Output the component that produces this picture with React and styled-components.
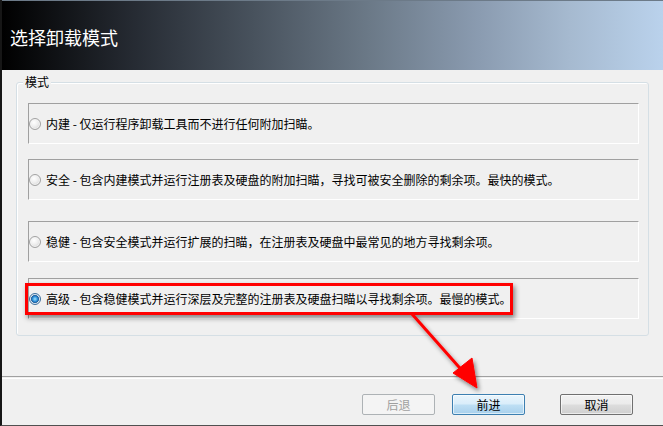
import React from 'react';
import styled, { createGlobalStyle } from 'styled-components';

const GlobalStyle = createGlobalStyle`
  html, body {
    margin: 0;
    padding: 0;
    background: #f0f0f0;
  }
  body {
    font-family: "Noto Sans CJK SC", "Liberation Sans", sans-serif;
    font-size: 12px;
    color: #000;
  }
`;

const Window = styled.div`
  position: relative;
  width: 663px;
  height: 426px;
  box-sizing: border-box;
  border-left: 2px solid #161616;
  border-bottom: 1px solid #505050;
  background: #f0f0f0;
  display: flex;
  flex-direction: column;
  overflow: hidden;
`;

const Header = styled.div`
  height: 70px;
  flex: none;
  display: flex;
  align-items: center;
  padding-left: 8px;
  border-top: 1px solid #6c7a88;
  box-sizing: border-box;
  background: linear-gradient(
    to right,
    #000000 0%,
    #262b33 20%,
    #48525d 38%,
    #6a7886 55%,
    #8a9bb0 72%,
    #a6bad0 86%,
    #bad2ec 100%
  );
`;

const Title = styled.h1`
  margin: 0;
  font-size: 18px;
  font-weight: 400;
  color: #fff;
  letter-spacing: 0;
  line-height: 20px;
  padding-top: 2px;
`;

const Group = styled.div`
  position: relative;
  margin: 12px 0 0 14px;
  width: 633px;
  height: 254px;
  box-sizing: border-box;
  border: 1px solid #d5dfe5;
  border-radius: 3px;
  box-shadow: inset 1px 1px 0 #ffffff;
  padding: 20px 0 0 11px;
`;

const Legend = styled.span`
  position: absolute;
  top: -8px;
  left: 6px;
  padding: 0 2px;
  background: #f0f0f0;
  line-height: 14px;
`;

const OptionList = styled.div`
  display: flex;
  flex-direction: column;
`;

const Option = styled.div`
  position: relative;
  width: 611px;
  height: 41px;
  box-sizing: border-box;
  margin-top: ${(p) => p.$mt}px;
  border-top: 1px solid #a0a0a0;
  border-left: 1px solid #a0a0a0;
  border-right: 1px solid #ffffff;
  border-bottom: 1px solid #ffffff;
  display: flex;
  align-items: center;
  gap: 5px;
  padding-left: 0;
  white-space: nowrap;
`;

const Radio = styled.span`
  position: relative;
  width: 12px;
  height: 12px;
  box-sizing: border-box;
  border-radius: 50%;
  flex: none;
  margin-left: 0;
  border: 1px solid ${(p) => (p.$checked ? '#3c6f9c' : '#a3a3a3')};
  background: ${(p) =>
    p.$checked
      ? 'radial-gradient(circle at 50% 50%, #9fe4ff 0%, #2d8fd8 35%, #14508e 55%, #e8eef4 62%, #c5d0da 100%)'
      : 'radial-gradient(circle at 40% 35%, #ffffff 0%, #eeeeee 45%, #c9c9c9 100%)'};
  box-shadow: inset 0 0 0 1px ${(p) => (p.$checked ? '#dbe6f0' : '#f4f4f4')};
`;

const Highlight = styled.div`
  position: absolute;
  left: -4px;
  top: 4px;
  width: 488px;
  height: 32px;
  box-sizing: border-box;
  border: 3px solid #ff0000;
  box-shadow: 2px 3px 5px rgba(0, 0, 0, 0.45);
  pointer-events: none;
`;

const Separator = styled.div`
  margin-top: 40px;
  height: 1px;
  border-top: 1px solid #a0a0a0;
  border-bottom: 1px solid #ffffff;
`;

const Footer = styled.div`
  display: flex;
  justify-content: flex-end;
  padding: 15px 30px 0 0;
`;

const Button = styled.button`
  width: 73px;
  height: 21px;
  margin-left: ${(p) => p.$ml}px;
  box-sizing: border-box;
  padding: 0;
  font-family: inherit;
  font-size: 12px;
  line-height: 18px;
  border-radius: 2px;
  border: 1px solid ${(p) => (p.$variant === 'primary' ? '#3c7fb1' : p.$variant === 'disabled' ? '#adb2b5' : '#707070')};
  color: ${(p) => (p.$variant === 'disabled' ? '#a0a0a0' : '#000')};
  background: ${(p) =>
    p.$variant === 'primary'
      ? 'linear-gradient(to bottom, #eaf5fc 0%, #d9edfa 48%, #bedff4 52%, #a8d0ec 100%)'
      : p.$variant === 'disabled'
      ? '#f4f4f4'
      : 'linear-gradient(to bottom, #f2f2f2 0%, #ebebeb 48%, #dddddd 52%, #cfcfcf 100%)'};
  box-shadow: inset 0 0 0 1px ${(p) => (p.$variant === 'disabled' ? '#f4f4f4' : 'rgba(255,255,255,0.6)')};
`;

const ArrowLayer = styled.svg`
  position: absolute;
  left: -2px;
  top: 0;
  width: 663px;
  height: 426px;
  pointer-events: none;
`;

const options = [
  { label: '内建 - 仅运行程序卸载工具而不进行任何附加扫瞄。', mt: 0 },
  { label: '安全 - 包含内建模式并运行注册表及硬盘的附加扫瞄，寻找可被安全删除的剩余项。最快的模式。', mt: 15 },
  { label: '稳健 - 包含安全模式并运行扩展的扫瞄，在注册表及硬盘中最常见的地方寻找剩余项。', mt: 21 },
  { label: '高级 - 包含稳健模式并运行深层及完整的注册表及硬盘扫瞄以寻找剩余项。最慢的模式。', mt: 16, checked: true },
];

export default function App() {
  return (
    <>
      <GlobalStyle />
      <Window>
        <Header>
          <Title>选择卸载模式</Title>
        </Header>
        <Group>
          <Legend>模式</Legend>
          <OptionList>
            {options.map((o) => (
              <Option key={o.label} $mt={o.mt}>
                <Radio $checked={o.checked} />
                <span>{o.label}</span>
                {o.checked && <Highlight />}
              </Option>
            ))}
          </OptionList>
        </Group>
        <Separator />
        <Footer>
          <Button $variant="disabled" $ml={0} disabled>后退</Button>
          <Button $variant="primary" $ml={17}>前进</Button>
          <Button $ml={35}>取消</Button>
        </Footer>
        <ArrowLayer viewBox="0 0 663 426">
          <defs>
            <filter id="shadow" x="-20%" y="-20%" width="140%" height="140%">
              <feDropShadow dx="2" dy="3" stdDeviation="2" floodColor="#000" floodOpacity="0.45" />
            </filter>
          </defs>
          <g filter="url(#shadow)" fill="#ff0000" stroke="#ff0000">
            <line x1="412" y1="314" x2="466" y2="375" strokeWidth="3" />
            <polygon points="477,388 453,373 472,358" strokeWidth="1" />
          </g>
        </ArrowLayer>
      </Window>
    </>
  );
}
